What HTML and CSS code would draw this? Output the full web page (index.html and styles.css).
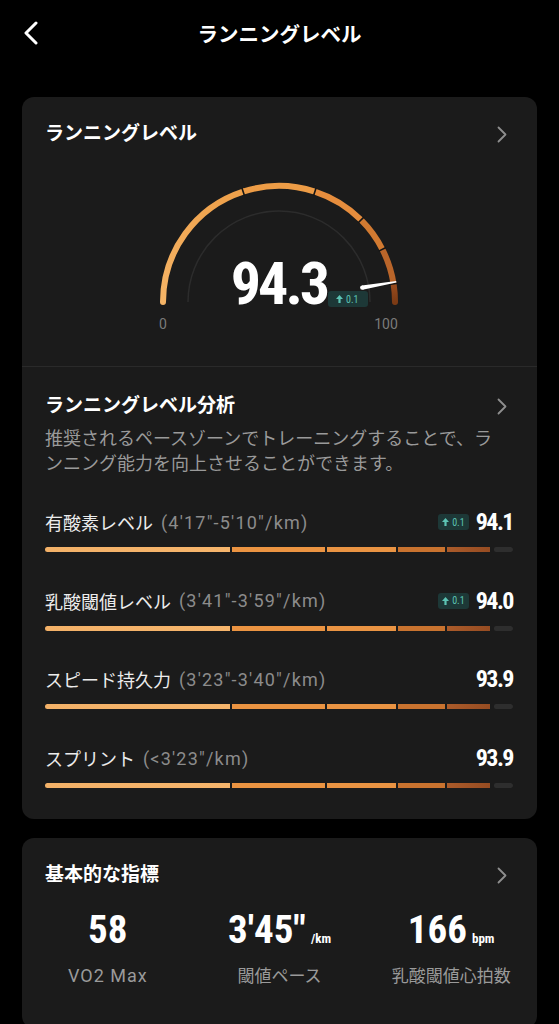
FILE: index.html
```html
<!DOCTYPE html>
<html lang="ja">
<head>
    <meta charset="UTF-8">
    <meta name="viewport" content="width=device-width, initial-scale=1.0">
    <title>ランニングレベル</title>
    <link rel="stylesheet" href="styles.css">
</head>
<body>
    <header class="topbar">
        <button class="back" type="button" aria-label="戻る">
            <svg width="16" height="24" viewBox="0 0 16 24"><path d="M13 2 L3 12 L13 22" fill="none" stroke="#fff" stroke-width="3" stroke-linecap="round" stroke-linejoin="round"/></svg>
        </button>
        <h1>ランニングレベル</h1>
    </header>

    <main class="page">
        <section class="card">
            <div class="card-top">
                <div class="card-head">
                    <h2>ランニングレベル</h2>
                    <svg class="chev" width="10" height="17" viewBox="0 0 10 17"><path d="M1.5 1.5 L8.5 8.5 L1.5 15.5" fill="none" stroke="#8e8e8e" stroke-width="1.8" stroke-linecap="round" stroke-linejoin="round"/></svg>
                </div>

                <!-- gauge: centre (130,130), r 116, zones 0-40-60-75-85-95-100 -->
                <div class="gauge">
                    <svg class="gauge-svg" width="260" height="165" viewBox="0 0 260 165">
                        <defs>
                            <linearGradient id="g1" x1="0" y1="1" x2="0.6" y2="0">
                                <stop offset="0" stop-color="#f5b466"/>
                                <stop offset="1" stop-color="#efa24c"/>
                            </linearGradient>
                            <linearGradient id="g6" x1="0" y1="0" x2="0" y2="1">
                                <stop offset="0" stop-color="#9a4c1e"/>
                                <stop offset="1" stop-color="#7c3b15"/>
                            </linearGradient>
                        </defs>
                        <path d="M39 130 A91 91 0 0 1 221 130" fill="none" stroke="#2c2c2c" stroke-width="1.5"/>
                        <g fill="none" stroke-width="6">
                            <path d="M14 130 A116 116 0 0 1 94.15 19.68" stroke="url(#g1)" stroke-linecap="round"/>
                            <path d="M94.15 19.68 A116 116 0 0 1 165.85 19.68" stroke="#ed9c46"/>
                            <path d="M165.85 19.68 A116 116 0 0 1 212.02 47.98" stroke="#e68d3d"/>
                            <path d="M212.02 47.98 A116 116 0 0 1 233.36 77.34" stroke="#d27a31"/>
                            <path d="M233.36 77.34 A116 116 0 0 1 244.57 111.86" stroke="#b9652a"/>
                            <path d="M244.57 111.86 A116 116 0 0 1 246 130" stroke="url(#g6)" stroke-linecap="round"/>
                        </g>
                        <g stroke="#151515" stroke-width="1.6">
                            <line x1="95.39" y1="23.49" x2="92.92" y2="15.88"/>
                            <line x1="164.61" y1="23.49" x2="167.08" y2="15.88"/>
                            <line x1="209.2" y1="50.8" x2="214.85" y2="45.15"/>
                            <line x1="229.79" y1="79.15" x2="236.92" y2="75.52"/>
                            <line x1="240.62" y1="112.48" x2="248.52" y2="111.23"/>
                        </g>
                        <polygon points="213.64,117.79 247.38,110.44 247.14,109.06 212.9,113.45" fill="#fff"/>
                        <circle cx="213.27" cy="115.62" r="2.2" fill="#fff"/>
                        <text class="gauge-tick" x="14" y="157" text-anchor="middle">0</text>
                        <text class="gauge-tick" x="237" y="157" text-anchor="middle">100</text>
                    </svg>
                    <div class="gauge-value">94.3</div>
                    <span class="delta gauge-delta">
                        <svg width="7" height="8" viewBox="0 0 7 8"><path d="M3.5 0 L7 4 H4.6 V8 H2.4 V4 H0 Z" fill="#5cc4b4"/></svg>0.1
                    </span>
                </div>
            </div>

            <div class="analysis">
                <div class="card-head">
                    <h2>ランニングレベル分析</h2>
                    <svg class="chev" width="10" height="17" viewBox="0 0 10 17"><path d="M1.5 1.5 L8.5 8.5 L1.5 15.5" fill="none" stroke="#8e8e8e" stroke-width="1.8" stroke-linecap="round" stroke-linejoin="round"/></svg>
                </div>
                <p class="desc">推奨されるペースゾーンでトレーニングすることで、ランニング能力を向上させることができます。</p>

                <div class="levels">
                    <div class="level">
                        <div class="level-top">
                            <span class="level-name">有酸素レベル</span>
                            <span class="pace">(4'17"-5'10"/km)</span>
                            <span class="delta">
                                <svg width="7" height="8" viewBox="0 0 7 8"><path d="M3.5 0 L7 4 H4.6 V8 H2.4 V4 H0 Z" fill="#5cc4b4"/></svg>0.1
                            </span>
                            <span class="level-value">94.1</span>
                        </div>
                        <div class="bar"><i class="s1"></i><i class="s2"></i><i class="s3"></i><i class="s4"></i><i class="s5"></i><i class="rest"></i></div>
                    </div>
                    <div class="level">
                        <div class="level-top">
                            <span class="level-name">乳酸閾値レベル</span>
                            <span class="pace">(3'41"-3'59"/km)</span>
                            <span class="delta">
                                <svg width="7" height="8" viewBox="0 0 7 8"><path d="M3.5 0 L7 4 H4.6 V8 H2.4 V4 H0 Z" fill="#5cc4b4"/></svg>0.1
                            </span>
                            <span class="level-value">94.0</span>
                        </div>
                        <div class="bar"><i class="s1"></i><i class="s2"></i><i class="s3"></i><i class="s4"></i><i class="s5"></i><i class="rest"></i></div>
                    </div>
                    <div class="level">
                        <div class="level-top">
                            <span class="level-name">スピード持久力</span>
                            <span class="pace">(3'23"-3'40"/km)</span>
                            <span class="level-value push">93.9</span>
                        </div>
                        <div class="bar"><i class="s1"></i><i class="s2"></i><i class="s3"></i><i class="s4"></i><i class="s5"></i><i class="rest"></i></div>
                    </div>
                    <div class="level">
                        <div class="level-top">
                            <span class="level-name">スプリント</span>
                            <span class="pace">(&lt;3'23"/km)</span>
                            <span class="level-value push">93.9</span>
                        </div>
                        <div class="bar"><i class="s1"></i><i class="s2"></i><i class="s3"></i><i class="s4"></i><i class="s5"></i><i class="rest"></i></div>
                    </div>
                </div>
            </div>
        </section>

        <section class="card">
            <div class="card-head basics-head">
                <h2>基本的な指標</h2>
                <svg class="chev" width="10" height="17" viewBox="0 0 10 17"><path d="M1.5 1.5 L8.5 8.5 L1.5 15.5" fill="none" stroke="#8e8e8e" stroke-width="1.8" stroke-linecap="round" stroke-linejoin="round"/></svg>
            </div>
            <div class="stats">
                <div class="stat">
                    <div class="stat-num">58</div>
                    <div class="stat-label latin">VO2 Max</div>
                </div>
                <div class="stat">
                    <div class="stat-num">3'45"<small>/km</small></div>
                    <div class="stat-label">閾値ペース</div>
                </div>
                <div class="stat">
                    <div class="stat-num">166<small>bpm</small></div>
                    <div class="stat-label">乳酸閾値心拍数</div>
                </div>
            </div>
        </section>
    </main>
</body>
</html>
```

FILE: styles.css
```css
body {
    margin: 0;
    background-color: #000;
    color: #fff;
    font-family: Roboto, "Noto Sans CJK JP", sans-serif;
}

.topbar {
    height: 66px;
    display: grid;
    grid-template-columns: 1fr auto 1fr;
    align-items: center;
}

.back {
    justify-self: start;
    margin-left: 23px;
    padding: 0;
    border: none;
    background: none;
    display: flex;
}

.topbar h1 {
    margin: 0;
    font-size: 20.5px;
    font-weight: 700;
}

.page {
    padding: 31px 22px 0;
    display: flex;
    flex-direction: column;
    gap: 19px;
}

.card {
    background-color: #1b1b1b;
    border-radius: 12px;
}

.card-head {
    display: flex;
    justify-content: space-between;
    align-items: center;
    height: 26px;
}

.card-head h2 {
    margin: 0;
    font-size: 19px;
    font-weight: 700;
    line-height: 26px;
}

.chev {
    margin-right: 6px;
}

.card-top {
    padding: 24px 24px 29px 23px;
    border-bottom: 1px solid #2a2a2a;
}

.gauge {
    position: relative;
    width: 260px;
    height: 165px;
    margin: 25px auto 0;
}

.gauge-svg {
    display: block;
}

.gauge-tick {
    font-family: Roboto, sans-serif;
    font-size: 14px;
    fill: #7a7a7a;
}

.gauge-value {
    position: absolute;
    left: 0;
    right: 0;
    top: 82px;
    text-align: center;
    font-family: "Roboto Condensed", sans-serif;
    font-size: 60px;
    line-height: 60px;
    font-weight: 700;
    letter-spacing: -3px;
}

.delta {
    display: inline-flex;
    align-items: center;
    gap: 3px;
    height: 16px;
    padding: 0 4px;
    border-radius: 3px;
    background-color: #1d3837;
    color: #5cc4b4;
    font-family: "Roboto Condensed", sans-serif;
    font-size: 10px;
}

.gauge-delta {
    position: absolute;
    left: 179px;
    top: 119px;
    padding: 0 9px 0 8px;
}

.analysis {
    padding: 26px 24px 31px 23px;
}

.desc {
    margin: 7px 0 0;
    padding-right: 10px;
    font-size: 18px;
    line-height: 25px;
    color: #9a9a9a;
}

.levels {
    margin-top: 34px;
    display: flex;
    flex-direction: column;
    gap: 36.7px;
}

.level-top {
    display: flex;
    align-items: center;
    height: 24px;
}

.level-name {
    font-size: 18px;
    color: #ececec;
}

.pace {
    margin-left: 8px;
    font-size: 18px;
    letter-spacing: 1.2px;
    color: #8c8c8c;
}

.level-top .delta {
    margin-left: auto;
}

.level-value {
    margin-left: 7px;
    font-family: "Roboto Condensed", sans-serif;
    font-size: 24px;
    font-weight: 700;
    letter-spacing: -1.5px;
}

.level-value.push {
    margin-left: auto;
}

.bar {
    margin-top: 13px;
    height: 5px;
    display: flex;
    gap: 2px;
    border-radius: 3px;
    overflow: hidden;
}

.bar i {
    display: block;
}

.bar .s1 { flex: 40; background: linear-gradient(90deg, #f3b168, #f6b56c); }
.bar .s2 { flex: 20; background-color: #eb9442; }
.bar .s3 { flex: 15; background-color: #ea9443; }
.bar .s4 { flex: 10; background-color: #c9732f; }
.bar .s5 { flex: 9.3; background: linear-gradient(90deg, #ab5b2a, #964c22); }
.bar .rest { flex: 4.2; margin-left: 2px; background-color: #2e2e2e; border-radius: 2px; }

.basics-head {
    padding: 24px 24px 0 23px;
}

.stats {
    display: grid;
    grid-template-columns: repeat(3, 1fr);
    margin-top: 20px;
    padding-bottom: 40px;
}

.stat {
    text-align: center;
}

.stat-num {
    height: 44px;
    font-family: "Roboto Condensed", sans-serif;
    font-size: 39px;
    font-weight: 700;
    line-height: 44px;
}

.stat-num small {
    margin-left: 5px;
    font-size: 13px;
    font-weight: 700;
    line-height: 1;
}

.stat-label {
    margin-top: 12px;
    font-size: 17px;
    line-height: 24px;
    color: #9a9a9a;
}

.stat-label.latin {
    font-size: 18px;
    letter-spacing: 1px;
}
```
